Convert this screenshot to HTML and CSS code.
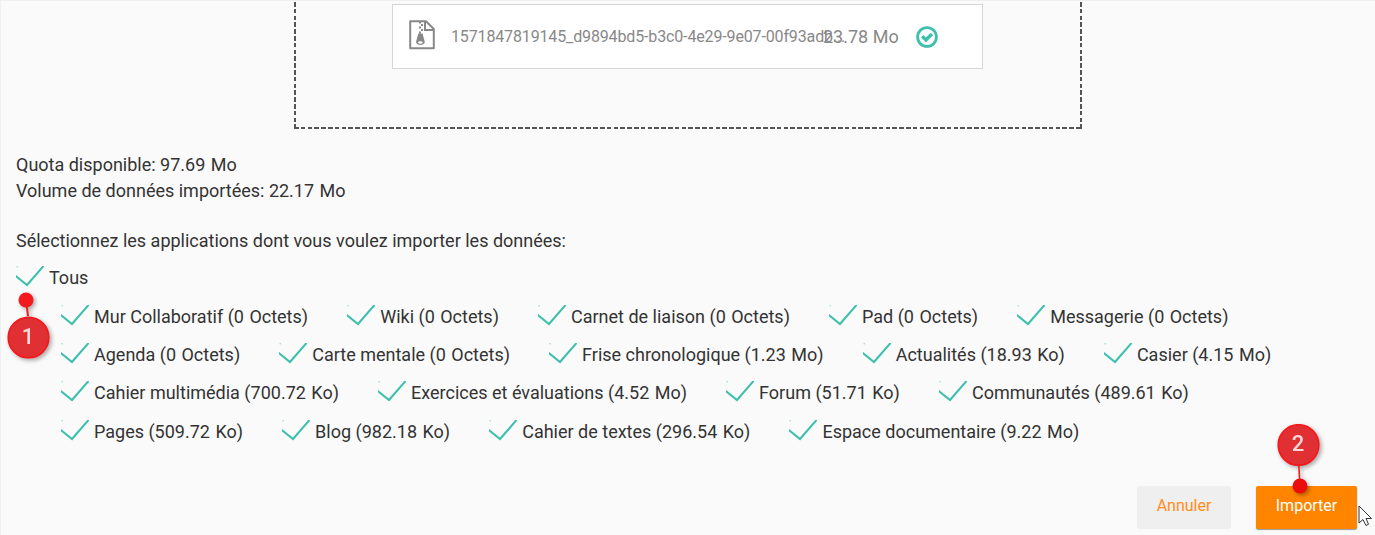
FILE: index.html
```html
<!DOCTYPE html>
<html lang="fr">
<head>
<meta charset="utf-8">
<title>Importer</title>
<link rel="stylesheet" href="styles.css">
</head>
<body>
<svg class="defs" width="0" height="0"><symbol id="check" viewBox="0 0 28 21"><path d="M-.5 9.800 11 19 28 -.5" fill="none" stroke="#3fbfad" stroke-width="2.100"/><path d="M.5 .8h1.500" stroke="#3fbfad" opacity=".6"/></symbol></svg>
<main class="page">
  <section class="dropzone">
    <div class="file">
      <svg class="file-icon" viewBox="0 0 26 30" fill="none" stroke="#888" stroke-width="2"><path d="M1.2 1.2H17L24.8 9V28.2H1.2Z" stroke-linejoin="round"/><path d="M16 1.5V10H24.5"/><path d="M10 2.5h2M12 5h2M10 7.5h2M12 10h2M10 12.5h2" stroke-width="1.8"/><path d="M9.3 13.500h4.200l2.200 8c.6 4.500-9.200 4.500-8.600 0Z" fill="#888" stroke="none"/><ellipse cx="11.400" cy="22.500" rx="2.300" ry="1.200" fill="#fff" stroke="none"/></svg>
      <span class="file-name">1571847819145_d9894bd5-b3c0-4e29-9e07-00f93adb...</span>
      <span class="file-size">23.78 Mo</span>
      <svg class="file-ok" viewBox="0 0 22 22" fill="none" stroke="#3fbfad"><circle cx="11" cy="11" r="9.400" stroke-width="2.800"/><path d="M6.100 10.200 9.900 13.800 16 8" stroke-width="3.500"/></svg>
    </div>
  </section>
  <section class="info">
    <p>Quota disponible: 97.69 <i>Mo</i></p>
    <p>Volume de données importées: 22.17 <i>Mo</i></p>
  </section>
  <p class="prompt">Sélectionnez les applications dont vous voulez importer les données:</p>
  <label class="item all"><svg class="check"><use href="#check"/></svg><span>Tous</span></label>
  <div class="apps">
    <div class="row">
      <label class="item"><svg class="check"><use href="#check"/></svg><span>Mur Collaboratif (0 <i>Octets)</i></span></label>
      <label class="item"><svg class="check"><use href="#check"/></svg><span>Wiki (0 <i>Octets)</i></span></label>
      <label class="item"><svg class="check"><use href="#check"/></svg><span>Carnet de liaison (0 <i>Octets)</i></span></label>
      <label class="item"><svg class="check"><use href="#check"/></svg><span>Pad (0 <i>Octets)</i></span></label>
      <label class="item"><svg class="check"><use href="#check"/></svg><span>Messagerie (0 <i>Octets)</i></span></label>
    </div>
    <div class="row">
      <label class="item"><svg class="check"><use href="#check"/></svg><span>Agenda (0 <i>Octets)</i></span></label>
      <label class="item"><svg class="check"><use href="#check"/></svg><span>Carte mentale (0 <i>Octets)</i></span></label>
      <label class="item"><svg class="check"><use href="#check"/></svg><span>Frise chronologique (1.23 <i>Mo)</i></span></label>
      <label class="item"><svg class="check"><use href="#check"/></svg><span>Actualités (18.93 <i>Ko)</i></span></label>
      <label class="item"><svg class="check"><use href="#check"/></svg><span>Casier (4.15 <i>Mo)</i></span></label>
    </div>
    <div class="row">
      <label class="item"><svg class="check"><use href="#check"/></svg><span>Cahier multimédia (700.72 <i>Ko)</i></span></label>
      <label class="item"><svg class="check"><use href="#check"/></svg><span>Exercices et évaluations (4.52 <i>Mo)</i></span></label>
      <label class="item"><svg class="check"><use href="#check"/></svg><span>Forum (51.71 <i>Ko)</i></span></label>
      <label class="item"><svg class="check"><use href="#check"/></svg><span>Communautés (489.61 <i>Ko)</i></span></label>
    </div>
    <div class="row">
      <label class="item"><svg class="check"><use href="#check"/></svg><span>Pages (509.72 <i>Ko)</i></span></label>
      <label class="item"><svg class="check"><use href="#check"/></svg><span>Blog (982.18 <i>Ko)</i></span></label>
      <label class="item"><svg class="check"><use href="#check"/></svg><span>Cahier de textes (296.54 <i>Ko)</i></span></label>
      <label class="item"><svg class="check"><use href="#check"/></svg><span>Espace documentaire (9.22 <i>Mo)</i></span></label>
    </div>
  </div>
  <footer class="actions">
    <button class="btn cancel">Annuler</button>
    <button class="btn import">Importer</button>
  </footer>
  <div class="callout one"><svg viewBox="0 0 50 76"><path d="M22 12 24 28" stroke="#f4191d" stroke-width="2"/><circle cx="22" cy="12" r="7.500" fill="#f4191d"/><circle cx="24.500" cy="49.500" r="20.300" fill="#e03033" stroke="#fa1518" stroke-width="1.600"/></svg><b>1</b></div>
  <div class="callout two"><svg viewBox="0 0 50 76"><path d="M24.800 41 26 62" stroke="#f4191d" stroke-width="1.600"/><circle cx="26" cy="62" r="7.500" fill="#ed0c0c"/><circle cx="24.500" cy="21" r="20.300" fill="#e03033" stroke="#fa1518" stroke-width="1.600"/></svg><b>2</b></div>
  <svg class="cursor" viewBox="0 0 15 22"><path d="M1 1V18L5 14.500 8 20.500 10.500 19.300 8 13.500H13.500Z" fill="#fff" stroke="#333344" stroke-width="1"/></svg>
</main>
</body>
</html>
```
FILE: styles.css
```css
* { box-sizing: border-box; }
body { margin: 0; background: #fafafa; font: 18px/26px Roboto, sans-serif; color: #333; }
p { margin: 0; }
i { font-style: normal; margin-left: 1px; }
.defs { position: absolute; }
.page { position: relative; width: 1375px; height: 535px; overflow: hidden; display: flex; flex-direction: column; border-top: 1px solid #f0f0f0; border-left: 1px solid #f0f0f0; padding-left: 15px; }
.dropzone {
  flex: none; width: 788px; height: 127px; margin: 1px 0 0 278px; padding: 2px 0 0 98px;
  background:
    repeating-linear-gradient(to bottom, #555 0 4.500px, transparent 4.500px 6.800px) left top / 2px 100% no-repeat,
    repeating-linear-gradient(to bottom, #555 0 4.500px, transparent 4.500px 6.800px) right top / 2px 100% no-repeat,
    repeating-linear-gradient(to right, #555 0 4.500px, transparent 4.500px 6.800px) left bottom / 100% 2px no-repeat;
}
.file { width: 591px; height: 65px; display: flex; align-items: center; background: #fff; border: 1px solid #d6d6d6; padding-left: 16px; color: #888; }
.file-icon { width: 26px; height: 30px; flex: none; margin: -3px 16px 0 0; }
.file-name { width: 372px; font-size: 16px; letter-spacing: -.140px; white-space: nowrap; flex: none; }
.file-size { width: 93px; flex: none; white-space: nowrap; }
.file-ok { width: 22px; height: 22px; flex: none; }
.info { margin-top: 23px; line-height: 25.600px; }
.prompt { margin-top: 25px; }
.item { display: flex; align-items: center; white-space: nowrap; height: 38.300px; }
.check { width: 28px; height: 21px; margin: -3px 5px 0 0; flex: none; }
.all { margin-top: 5px; }
.apps { padding-left: 45px; }
.row { display: flex; gap: 39.100px; height: 38.300px; }
.actions { display: flex; justify-content: flex-end; gap: 25px; padding-right: 18px; margin-top: 35px; }
.btn { height: 43px; border: 0; border-radius: 2px; font: 16px Roboto, sans-serif; padding: 0 0 3px; }
.cancel { width: 94px; background: #efefef; color: #ff8d1a; }
.import { width: 101px; background: #ff8500; color: #fff; box-shadow: 0 1px 1px #999; }
.callout { position: absolute; width: 50px; height: 76px; filter: drop-shadow(2px 2px 2px #0005); }
.callout svg { width: 50px; height: 76px; display: block; }
.callout b { position: absolute; left: 0; width: 48px; text-align: center; font: 500 22px/26px Roboto, sans-serif; color: #fbd8d8; }
.one { left: 3px; top: 287px; }
.one b { top: 36px; }
.two { left: 1273px; top: 423px; }
.two b { top: 7px; }
.cursor { position: absolute; left: 1357px; top: 504px; width: 15px; height: 22px; }
```
